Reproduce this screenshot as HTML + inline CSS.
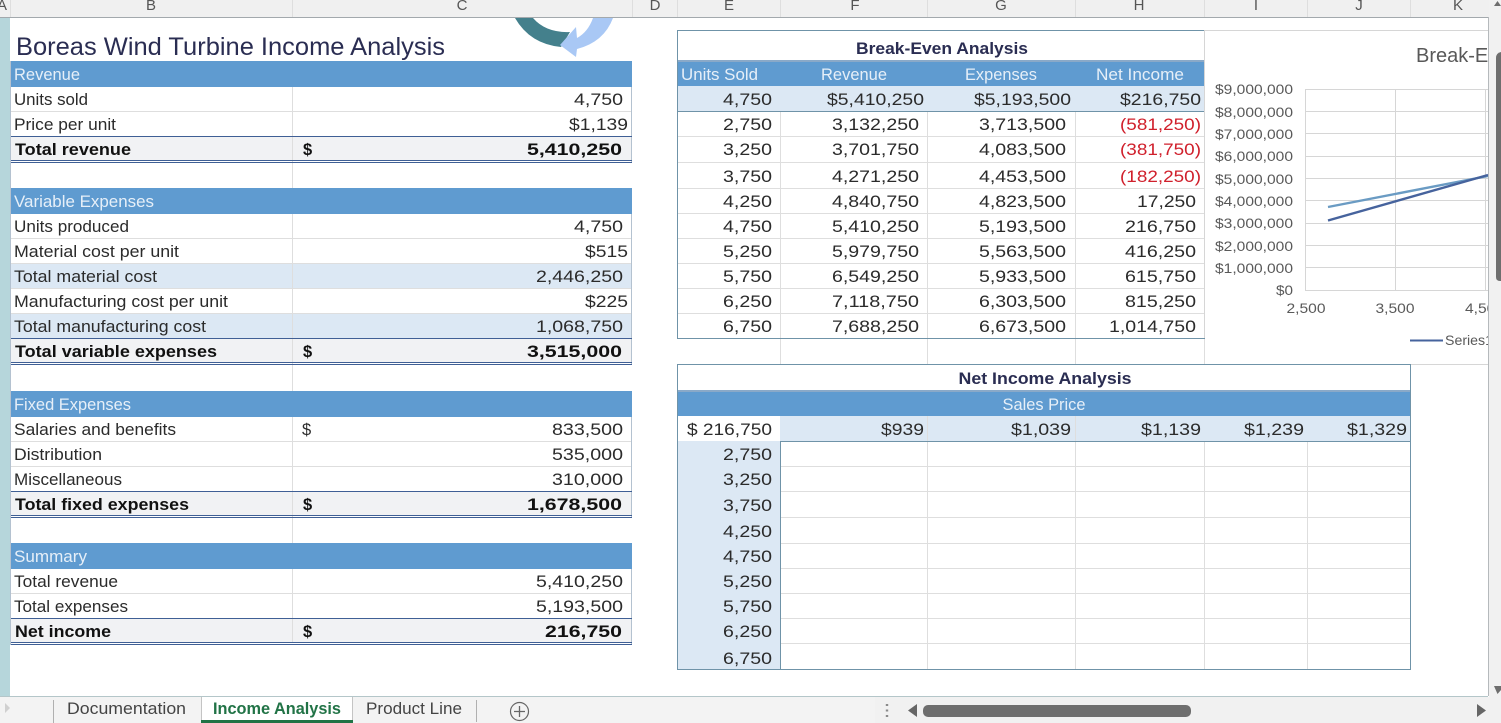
<!DOCTYPE html>
<html>
<head>
<meta charset="utf-8">
<style>
html,body{margin:0;padding:0;background:#fff;overflow:hidden;width:1501px;height:723px}
svg{display:block}
text{font-family:"Liberation Sans",sans-serif;font-size:16.5px;fill:#2b2b2b}
.b{font-weight:bold;fill:#111}
.w{fill:#e6eff8}
.e{text-anchor:end}
.m{text-anchor:middle}
.r{fill:#d0202c}
.h{fill:#555;font-size:15px}
.c{fill:#595959;font-size:13.5px}
.t{fill:#2a2d52}
.g{stroke:#dedede;stroke-width:1;fill:none}
.d{stroke:#3f5f95;stroke-width:1;fill:none}
.k{stroke:#6f93a8;stroke-width:1;fill:none}
.l{stroke:#d6d6d6;stroke-width:1;fill:none}
</style>
</head>
<body>
<svg width="1501" height="723" viewBox="0 0 1501 723" xmlns="http://www.w3.org/2000/svg">
<rect width="1501" height="723" fill="#fff"/>

<!-- column headers -->
<rect width="1501" height="17" fill="#f0f0f0"/>
<path class="g" d="M10.5 0V17M292.5 0V17M632.5 0V17M677.5 0V17M780.5 0V17M927.5 0V17M1075.5 0V17M1204.5 0V17M1307.5 0V17M1410.5 0V17"/>
<path d="M0 17.5H1488" stroke="#a3a9ad" fill="none"/>
<text class="h m" x="2" y="10">A</text><text class="h m" x="151" y="10">B</text><text class="h m" x="462" y="10">C</text><text class="h m" x="655" y="10">D</text><text class="h m" x="729" y="10">E</text><text class="h m" x="855" y="10">F</text><text class="h m" x="1001" y="10">G</text><text class="h m" x="1139" y="10">H</text><text class="h m" x="1256" y="10">I</text><text class="h m" x="1359" y="10">J</text><text class="h m" x="1458" y="10">K</text>

<!-- left strip -->
<rect x="0" y="18" width="10" height="678" fill="#b6d6db"/>

<!-- logo -->
<path d="M515 18 Q530 44 561 47 L570 32 Q546 33 533 18Z" fill="#44808c"/>
<path d="M593 18 Q588 32 577 38 L576 27 L560 45 L576 57 L577 49 Q604 42 613 18Z" fill="#a9c8f5"/>

<!-- title -->
<text class="t" x="16" y="55" font-size="25" style="font-size:25px" textLength="429" lengthAdjust="spacingAndGlyphs">Boreas Wind Turbine Income Analysis</text>

<!-- LEFT TABLE fills -->
<rect x="10" y="61" width="622" height="26" fill="#5f9bd0"/>
<rect x="10" y="137" width="622" height="24" fill="#f1f2f4"/>
<rect x="10" y="188" width="622" height="26" fill="#5f9bd0"/>
<rect x="10" y="264" width="622" height="25" fill="#dce8f4"/>
<rect x="10" y="314" width="622" height="25" fill="#dce8f4"/>
<rect x="10" y="339" width="622" height="24" fill="#f1f2f4"/>
<rect x="10" y="391" width="622" height="26" fill="#5f9bd0"/>
<rect x="10" y="492" width="622" height="24" fill="#f1f2f4"/>
<rect x="10" y="543" width="622" height="26" fill="#5f9bd0"/>
<rect x="10" y="619" width="622" height="24" fill="#f1f2f4"/>
<path class="g" d="M10 111.5H632M10 238.5H632M10 263.5H632M10 288.5H632M10 313.5H632M10 441.5H632M10 466.5H632M10 593.5H632"/>
<path class="g" d="M292.5 87V188M292.5 214V391M292.5 417V543M292.5 569V643"/>
<path d="M631.5 87V163M631.5 214V365M631.5 417V518M631.5 569V645" stroke="#b4c2d0" fill="none"/>
<path class="d" d="M10 136.5H632M10 160.5H632M10 162.5H632M10 338.5H632M10 362.5H632M10 364.5H632M10 491.5H632M10 515.5H632M10 517.5H632M10 618.5H632M10 642.5H632M10 644.5H632"/>
<path d="M10.5 61V645" stroke="#b4c2d0" fill="none"/>

<!-- LEFT TABLE text -->
<text class="w" x="14" y="80" textLength="66" lengthAdjust="spacingAndGlyphs">Revenue</text>
<text x="14" y="105" textLength="74" lengthAdjust="spacingAndGlyphs">Units sold</text>
<text class="e" x="623" y="105" textLength="49" lengthAdjust="spacingAndGlyphs">4,750</text>
<text x="14" y="130" textLength="102" lengthAdjust="spacingAndGlyphs">Price per unit</text>
<text class="e" x="628" y="130" textLength="59" lengthAdjust="spacingAndGlyphs">$1,139</text>
<text class="b" x="15" y="155" textLength="116" lengthAdjust="spacingAndGlyphs">Total revenue</text>
<text class="b" x="303" y="155">$</text>
<text class="b e" x="622" y="155" textLength="95" lengthAdjust="spacingAndGlyphs">5,410,250</text>

<text class="w" x="14" y="207" textLength="140" lengthAdjust="spacingAndGlyphs">Variable Expenses</text>
<text x="14" y="232" textLength="115" lengthAdjust="spacingAndGlyphs">Units produced</text>
<text class="e" x="623" y="232" textLength="49" lengthAdjust="spacingAndGlyphs">4,750</text>
<text x="14" y="257" textLength="165" lengthAdjust="spacingAndGlyphs">Material cost per unit</text>
<text class="e" x="628" y="257" textLength="43" lengthAdjust="spacingAndGlyphs">$515</text>
<text x="14" y="282" textLength="143" lengthAdjust="spacingAndGlyphs">Total material cost</text>
<text class="e" x="623" y="282" textLength="87" lengthAdjust="spacingAndGlyphs">2,446,250</text>
<text x="14" y="307" textLength="214" lengthAdjust="spacingAndGlyphs">Manufacturing cost per unit</text>
<text class="e" x="628" y="307" textLength="43" lengthAdjust="spacingAndGlyphs">$225</text>
<text x="14" y="332" textLength="192" lengthAdjust="spacingAndGlyphs">Total manufacturing cost</text>
<text class="e" x="623" y="332" textLength="87" lengthAdjust="spacingAndGlyphs">1,068,750</text>
<text class="b" x="15" y="357" textLength="202" lengthAdjust="spacingAndGlyphs">Total variable expenses</text>
<text class="b" x="303" y="357">$</text>
<text class="b e" x="622" y="357" textLength="95" lengthAdjust="spacingAndGlyphs">3,515,000</text>

<text class="w" x="14" y="410" textLength="117" lengthAdjust="spacingAndGlyphs">Fixed Expenses</text>
<text x="14" y="435" textLength="162" lengthAdjust="spacingAndGlyphs">Salaries and benefits</text>
<text x="302" y="435">$</text>
<text class="e" x="623" y="435" textLength="71" lengthAdjust="spacingAndGlyphs">833,500</text>
<text x="14" y="460" textLength="88" lengthAdjust="spacingAndGlyphs">Distribution</text>
<text class="e" x="623" y="460" textLength="71" lengthAdjust="spacingAndGlyphs">535,000</text>
<text x="14" y="485" textLength="108" lengthAdjust="spacingAndGlyphs">Miscellaneous</text>
<text class="e" x="623" y="485" textLength="71" lengthAdjust="spacingAndGlyphs">310,000</text>
<text class="b" x="15" y="510" textLength="174" lengthAdjust="spacingAndGlyphs">Total fixed expenses</text>
<text class="b" x="303" y="510">$</text>
<text class="b e" x="622" y="510" textLength="95" lengthAdjust="spacingAndGlyphs">1,678,500</text>

<text class="w" x="14" y="562" textLength="73" lengthAdjust="spacingAndGlyphs">Summary</text>
<text x="14" y="587" textLength="104" lengthAdjust="spacingAndGlyphs">Total revenue</text>
<text class="e" x="623" y="587" textLength="87" lengthAdjust="spacingAndGlyphs">5,410,250</text>
<text x="14" y="612" textLength="114" lengthAdjust="spacingAndGlyphs">Total expenses</text>
<text class="e" x="623" y="612" textLength="87" lengthAdjust="spacingAndGlyphs">5,193,500</text>
<text class="b" x="15" y="637" textLength="96" lengthAdjust="spacingAndGlyphs">Net income</text>
<text class="b" x="303" y="637">$</text>
<text class="b e" x="622" y="637" textLength="77" lengthAdjust="spacingAndGlyphs">216,750</text>

<!-- BREAK-EVEN TABLE -->
<rect x="678" y="61" width="526" height="25" fill="#5f9bd0"/>
<rect x="678" y="60" width="526" height="2" fill="#8aa9c8"/>
<rect x="678" y="86" width="526" height="25" fill="#dce8f4"/>
<path class="g" d="M678 136.5H1204M678 162.5H1204M678 188.5H1204M678 213.5H1204M678 238.5H1204M678 263.5H1204M678 288.5H1204M678 313.5H1204"/>
<path class="g" d="M780.5 111V364M927.5 111V364M1075.5 111V364M1204.5 338V364"/>
<path class="k" d="M678 111.5H1204"/>
<rect x="677.5" y="30.5" width="527" height="308" class="k"/>
<text class="m t b" style="fill:#2a2d52" x="942" y="54" textLength="172" lengthAdjust="spacingAndGlyphs">Break-Even Analysis</text>
<text class="w" x="681" y="80" textLength="77" lengthAdjust="spacingAndGlyphs">Units Sold</text>
<text class="w" x="821" y="80" textLength="66" lengthAdjust="spacingAndGlyphs">Revenue</text>
<text class="w" x="965" y="80" textLength="72" lengthAdjust="spacingAndGlyphs">Expenses</text>
<text class="w" x="1096" y="80" textLength="88" lengthAdjust="spacingAndGlyphs">Net Income</text>

<text class="e" x="772" y="105" textLength="49" lengthAdjust="spacingAndGlyphs">4,750</text>
<text class="e" x="924" y="105" textLength="97" lengthAdjust="spacingAndGlyphs">$5,410,250</text>
<text class="e" x="1071" y="105" textLength="97" lengthAdjust="spacingAndGlyphs">$5,193,500</text>
<text class="e" x="1201" y="105" textLength="81" lengthAdjust="spacingAndGlyphs">$216,750</text>

<text class="e" x="772" y="130" textLength="49" lengthAdjust="spacingAndGlyphs">2,750</text>
<text class="e" x="919" y="130" textLength="87" lengthAdjust="spacingAndGlyphs">3,132,250</text>
<text class="e" x="1066" y="130" textLength="87" lengthAdjust="spacingAndGlyphs">3,713,500</text>
<text class="e r" x="1201" y="130" textLength="81" lengthAdjust="spacingAndGlyphs">(581,250)</text>

<text class="e" x="772" y="155" textLength="49" lengthAdjust="spacingAndGlyphs">3,250</text>
<text class="e" x="919" y="155" textLength="87" lengthAdjust="spacingAndGlyphs">3,701,750</text>
<text class="e" x="1066" y="155" textLength="87" lengthAdjust="spacingAndGlyphs">4,083,500</text>
<text class="e r" x="1201" y="155" textLength="81" lengthAdjust="spacingAndGlyphs">(381,750)</text>

<text class="e" x="772" y="182" textLength="49" lengthAdjust="spacingAndGlyphs">3,750</text>
<text class="e" x="919" y="182" textLength="87" lengthAdjust="spacingAndGlyphs">4,271,250</text>
<text class="e" x="1066" y="182" textLength="87" lengthAdjust="spacingAndGlyphs">4,453,500</text>
<text class="e r" x="1201" y="182" textLength="81" lengthAdjust="spacingAndGlyphs">(182,250)</text>

<text class="e" x="772" y="207" textLength="49" lengthAdjust="spacingAndGlyphs">4,250</text>
<text class="e" x="919" y="207" textLength="87" lengthAdjust="spacingAndGlyphs">4,840,750</text>
<text class="e" x="1066" y="207" textLength="87" lengthAdjust="spacingAndGlyphs">4,823,500</text>
<text class="e" x="1196" y="207" textLength="59" lengthAdjust="spacingAndGlyphs">17,250</text>

<text class="e" x="772" y="232" textLength="49" lengthAdjust="spacingAndGlyphs">4,750</text>
<text class="e" x="919" y="232" textLength="87" lengthAdjust="spacingAndGlyphs">5,410,250</text>
<text class="e" x="1066" y="232" textLength="87" lengthAdjust="spacingAndGlyphs">5,193,500</text>
<text class="e" x="1196" y="232" textLength="71" lengthAdjust="spacingAndGlyphs">216,750</text>

<text class="e" x="772" y="257" textLength="49" lengthAdjust="spacingAndGlyphs">5,250</text>
<text class="e" x="919" y="257" textLength="87" lengthAdjust="spacingAndGlyphs">5,979,750</text>
<text class="e" x="1066" y="257" textLength="87" lengthAdjust="spacingAndGlyphs">5,563,500</text>
<text class="e" x="1196" y="257" textLength="71" lengthAdjust="spacingAndGlyphs">416,250</text>

<text class="e" x="772" y="282" textLength="49" lengthAdjust="spacingAndGlyphs">5,750</text>
<text class="e" x="919" y="282" textLength="87" lengthAdjust="spacingAndGlyphs">6,549,250</text>
<text class="e" x="1066" y="282" textLength="87" lengthAdjust="spacingAndGlyphs">5,933,500</text>
<text class="e" x="1196" y="282" textLength="71" lengthAdjust="spacingAndGlyphs">615,750</text>

<text class="e" x="772" y="307" textLength="49" lengthAdjust="spacingAndGlyphs">6,250</text>
<text class="e" x="919" y="307" textLength="87" lengthAdjust="spacingAndGlyphs">7,118,750</text>
<text class="e" x="1066" y="307" textLength="87" lengthAdjust="spacingAndGlyphs">6,303,500</text>
<text class="e" x="1196" y="307" textLength="71" lengthAdjust="spacingAndGlyphs">815,250</text>

<text class="e" x="772" y="332" textLength="49" lengthAdjust="spacingAndGlyphs">6,750</text>
<text class="e" x="919" y="332" textLength="87" lengthAdjust="spacingAndGlyphs">7,688,250</text>
<text class="e" x="1066" y="332" textLength="87" lengthAdjust="spacingAndGlyphs">6,673,500</text>
<text class="e" x="1196" y="332" textLength="87" lengthAdjust="spacingAndGlyphs">1,014,750</text>

<!-- CHART -->
<path class="l" d="M1204 30.5H1488M1204 364.5H1488M1204.5 30V338"/>
<path class="l" d="M1305.5 89V291M1395.5 89V291M1485.5 89V291M1305 89.5H1488M1305 111.5H1488M1305 133.5H1488M1305 156.5H1488M1305 178.5H1488M1305 200.5H1488M1305 223.5H1488M1305 245.5H1488M1305 267.5H1488M1305 290.5H1488"/>
<path d="M1328 207L1488 176" stroke="#6a9bc3" stroke-width="2.4" fill="none"/>
<path d="M1328 220.5L1488 175" stroke="#46639d" stroke-width="2.4" fill="none"/>
<text x="1416" y="62" style="font-size:20px;fill:#595959">Break-Even</text>
<g>
<text class="c e" x="1293" y="94" textLength="78" lengthAdjust="spacingAndGlyphs">$9,000,000</text>
<text class="c e" x="1293" y="117" textLength="78" lengthAdjust="spacingAndGlyphs">$8,000,000</text>
<text class="c e" x="1293" y="139" textLength="78" lengthAdjust="spacingAndGlyphs">$7,000,000</text>
<text class="c e" x="1293" y="161" textLength="78" lengthAdjust="spacingAndGlyphs">$6,000,000</text>
<text class="c e" x="1293" y="184" textLength="78" lengthAdjust="spacingAndGlyphs">$5,000,000</text>
<text class="c e" x="1293" y="206" textLength="78" lengthAdjust="spacingAndGlyphs">$4,000,000</text>
<text class="c e" x="1293" y="228" textLength="78" lengthAdjust="spacingAndGlyphs">$3,000,000</text>
<text class="c e" x="1293" y="251" textLength="78" lengthAdjust="spacingAndGlyphs">$2,000,000</text>
<text class="c e" x="1293" y="273" textLength="78" lengthAdjust="spacingAndGlyphs">$1,000,000</text>
<text class="c e" x="1293" y="295" textLength="17" lengthAdjust="spacingAndGlyphs">$0</text>
<text class="c m" x="1306" y="313" textLength="39" lengthAdjust="spacingAndGlyphs">2,500</text>
<text class="c m" x="1395" y="313" textLength="39" lengthAdjust="spacingAndGlyphs">3,500</text>
<text class="c" x="1465" y="313" textLength="39" lengthAdjust="spacingAndGlyphs">4,500</text>
</g>
<path d="M1410 340.5H1443" stroke="#46639d" stroke-width="2" fill="none"/>
<text class="c" x="1445" y="345" textLength="48" lengthAdjust="spacingAndGlyphs">Series1</text>

<!-- NET INCOME TABLE -->
<rect x="678" y="391" width="732" height="25" fill="#5f9bd0"/>
<rect x="678" y="390" width="732" height="2" fill="#8aa9c8"/>
<rect x="780" y="416" width="630" height="25" fill="#dce8f4"/>
<rect x="678" y="441" width="102" height="229" fill="#dce8f4"/>
<path class="g" d="M780 466.5H1410M780 491.5H1410M780 517.5H1410M780 543.5H1410M780 568.5H1410M780 593.5H1410M780 618.5H1410M780 643.5H1410"/>
<path class="g" d="M927.5 416V670M1075.5 416V670M1204.5 441V670M1307.5 441V670"/>
<path class="k" d="M780 441.5H1410M780.5 441V670"/>
<rect x="677.5" y="364.5" width="733" height="305" class="k"/>
<text class="m b" style="fill:#2a2d52" x="1045" y="384" textLength="173" lengthAdjust="spacingAndGlyphs">Net Income Analysis</text>
<text class="w m" x="1044" y="410" textLength="83" lengthAdjust="spacingAndGlyphs">Sales Price</text>
<text class="e" x="772" y="435" textLength="85" lengthAdjust="spacingAndGlyphs">$ 216,750</text>
<text class="e" x="924" y="435" textLength="43" lengthAdjust="spacingAndGlyphs">$939</text>
<text class="e" x="1071" y="435" textLength="60" lengthAdjust="spacingAndGlyphs">$1,039</text>
<text class="e" x="1201" y="435" textLength="60" lengthAdjust="spacingAndGlyphs">$1,139</text>
<text class="e" x="1304" y="435" textLength="60" lengthAdjust="spacingAndGlyphs">$1,239</text>
<text class="e" x="1407" y="435" textLength="60" lengthAdjust="spacingAndGlyphs">$1,329</text>
<text class="e" x="772" y="460" textLength="49" lengthAdjust="spacingAndGlyphs">2,750</text>
<text class="e" x="772" y="485" textLength="49" lengthAdjust="spacingAndGlyphs">3,250</text>
<text class="e" x="772" y="511" textLength="49" lengthAdjust="spacingAndGlyphs">3,750</text>
<text class="e" x="772" y="537" textLength="49" lengthAdjust="spacingAndGlyphs">4,250</text>
<text class="e" x="772" y="562" textLength="49" lengthAdjust="spacingAndGlyphs">4,750</text>
<text class="e" x="772" y="587" textLength="49" lengthAdjust="spacingAndGlyphs">5,250</text>
<text class="e" x="772" y="612" textLength="49" lengthAdjust="spacingAndGlyphs">5,750</text>
<text class="e" x="772" y="637" textLength="49" lengthAdjust="spacingAndGlyphs">6,250</text>
<text class="e" x="772" y="664" textLength="49" lengthAdjust="spacingAndGlyphs">6,750</text>

<!-- right scrollbar -->
<rect x="1489" y="0" width="12" height="723" fill="#f1f1f1"/>
<path d="M1488.5 17V696" stroke="#b5b9bc" fill="none"/>
<path d="M1501 52V281H1500Q1496 281 1496 277V58Q1496 53 1501 52Z" fill="#6e6e6e"/>
<path d="M1494 6L1497.5 1L1501 6Z" fill="#6e6e6e"/>
<path d="M1494 686H1501V690L1497.5 694Z" fill="#6e6e6e"/>

<!-- bottom bar -->
<rect x="0" y="697" width="1489" height="26" fill="#f3f3f3"/>
<path d="M0 696.5H1488" stroke="#b4c6c9" fill="none"/>
<path d="M5 703V713L10 708Z" fill="#d0d0d0"/>
<path d="M53.5 700V723M476.5 700V722" stroke="#b0b0b0" fill="none"/>
<text x="67" y="714" style="fill:#444" textLength="119" lengthAdjust="spacingAndGlyphs">Documentation</text>
<rect x="201" y="697" width="152" height="26" fill="#fff"/>
<path d="M201.5 697V723M352.5 697V723" stroke="#c4c4c4" fill="none"/>
<rect x="201" y="720" width="152" height="3" fill="#217346"/>
<text x="213" y="714" style="fill:#217346;font-weight:bold" textLength="128" lengthAdjust="spacingAndGlyphs">Income Analysis</text>
<text x="366" y="714" style="fill:#444" textLength="96" lengthAdjust="spacingAndGlyphs">Product Line</text>
<circle cx="519.5" cy="711.5" r="9" fill="none" stroke="#666" stroke-width="1.2"/>
<path d="M519.5 706V717M514 711.5H525" stroke="#666" stroke-width="1.3" fill="none"/>
<rect x="875" y="697" width="614" height="26" fill="#f1f1f1"/>
<path d="M887 704v2M887 709.5v2M887 715v2" stroke="#8a8a8a" stroke-width="2.4" fill="none"/>
<path d="M917 704V717L908 710.5Z" fill="#666"/>
<rect x="923" y="705" width="268" height="12" rx="5" fill="#6e6e6e"/>
<path d="M1477 704V717L1486 710.5Z" fill="#666"/>
</svg>
</body>
</html>
